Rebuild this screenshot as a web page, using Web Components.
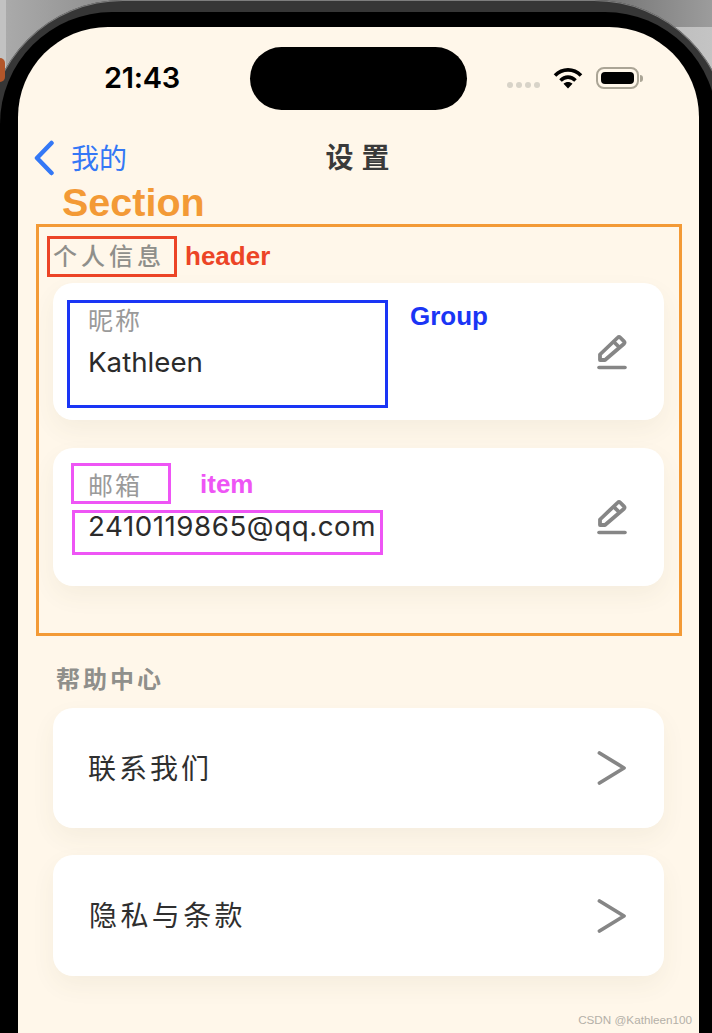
<!DOCTYPE html>
<html lang="zh">
<head>
<meta charset="utf-8">
<title>设置</title>
<style>
    html, body {
        margin: 0;
        width: 712px;
        height: 1033px;
        overflow: hidden;
    }
    body {
        position: relative;
        background:
            linear-gradient(90deg, #6f6f6f, #9c9c9c) 592px 0 / 120px 27px no-repeat,
            linear-gradient(90deg, #b0b0b0, #c4c4c4) 592px 27px / 120px 100px no-repeat,
            linear-gradient(90deg, #c2c2c2 0 6px, #aaaaaa 6px, #8c8c8c 120px);
        font-family: "Noto Sans CJK SC", sans-serif;
    }
</style>
</head>
<body>
    <phone-frame>
        <status-bar></status-bar>
        <nav-bar back="我的" title="设置"></nav-bar>

        <settings-section title="个人信息" first>
            <settings-card label="昵称" value="Kathleen" icon="edit"></settings-card>
            <settings-card label="邮箱" value="2410119865@qq.com" icon="edit" style="--value-top:0px;--main-bottom:35px;--value-space:0.55px"></settings-card>
        </settings-section>

        <settings-section title="帮助中心" heavy>
            <settings-card text="联系我们" icon="arrow"></settings-card>
            <settings-card text="隐私与条款" icon="arrow" style="--text-height:121px;--text-left:1px;--text-space:3.4px"></settings-card>
        </settings-section>
    </phone-frame>

    <note-box style="left:36px;top:224px;width:646px;height:412px;--note:#f39a36"></note-box>
    <note-box style="left:47px;top:236px;width:130px;height:41px;--note:#ec4426"></note-box>
    <note-box style="left:67px;top:300px;width:321px;height:108px;--note:#1a35f5"></note-box>
    <note-box style="left:71px;top:463px;width:100px;height:41px;--note:#ee55f5"></note-box>
    <note-box style="left:72px;top:510px;width:311px;height:45px;--note:#ee55f5"></note-box>

    <note-text style="left:62px;top:179px;font-size:39.5px;--note:#f39a36">Section</note-text>
    <note-text style="left:185px;top:241px;font-size:26px;--note:#ec4426">header</note-text>
    <note-text style="left:410px;top:301px;font-size:26px;--note:#1a35f5">Group</note-text>
    <note-text style="left:200px;top:469px;font-size:26px;--note:#ee55f5">item</note-text>

    <water-mark>CSDN @Kathleen100</water-mark>

<script>
class PhoneFrame extends HTMLElement {
    connectedCallback() {
        const shadow = this.attachShadow({ mode: 'open' })
        shadow.innerHTML = `
        <style>
            :host {
                display: block;
                width: 712px;
                height: 1033px;
                overflow: hidden;
            }
            .bezel {
                box-sizing: border-box;
                width: 741px;
                height: 1033px;
                margin-left: -12px;
                padding: 12px 12px 0;
                border-radius: 135px 135px 0 0;
                background: #363636;
                box-shadow: inset 0 0 0 1px #7d7d7d;
            }
            .body {
                height: 100%;
                box-sizing: border-box;
                padding: 15px 18px 0;
                border-radius: 112px 112px 0 0;
                background: #000;
            }
            .screen {
                height: 100%;
                border-radius: 90px 90px 0 0;
                background: #fff7ea;
                overflow: hidden;
            }
            .spot {
                position: absolute;
                left: -5px;
                top: 58px;
                width: 10px;
                height: 24px;
                border-radius: 5px;
                background: #b3562a;
            }
        </style>
        <div class="spot"></div>
        <div class="bezel"><div class="body"><div class="screen"><slot></slot></div></div></div>
        `
    }
}

class StatusBar extends HTMLElement {
    connectedCallback() {
        const shadow = this.attachShadow({ mode: 'open' })
        shadow.innerHTML = `
        <style>
            :host {
                display: block;
                height: 100px;
            }
            .row {
                display: grid;
                grid-template-columns: 232px 217px 1fr;
                height: 83px;
                padding-top: 20px;
                box-sizing: border-box;
            }
            .time {
                padding: 10px 0 0 86px;
                font: 600 29px/42px Inter, "Liberation Sans", sans-serif;
                letter-spacing: -0.3px;
                color: #000;
            }
            .island {
                height: 63px;
                border-radius: 32px;
                background: #000;
            }
            .right {
                display: flex;
                align-items: center;
                height: 44px;
                margin: 9px 0 0 40px;
            }
            .dots {
                display: flex;
                gap: 3px;
                margin: 13px 13px 0 0;
            }
            .dots i {
                width: 6px;
                height: 6px;
                border-radius: 50%;
                background: #d8d3c8;
            }
            .battery {
                box-sizing: border-box;
                width: 43px;
                height: 22px;
                margin-left: 13px;
                padding: 3px;
                border: 2px solid #aba596;
                border-radius: 8px;
            }
            .battery b {
                display: block;
                height: 100%;
                border-radius: 4px;
                background: #000;
            }
            .nub {
                width: 3px;
                height: 7px;
                margin-left: 1px;
                border-radius: 0 3px 3px 0;
                background: #aba596;
            }
        </style>
        <div class="row">
            <div class="time">21:43</div>
            <div class="island"></div>
            <div class="right">
                <div class="dots"><i></i><i></i><i></i><i></i></div>
                <svg width="30" height="22" viewBox="0 0 30 22">
                    <path d="M2 8.5C9.5 1 20.500 1 28 8.500" fill="none" stroke="#000" stroke-width="3.600"/>
                    <path d="M7.500 13.500C12 9 18 9 22.500 13.500" fill="none" stroke="#000" stroke-width="3.600"/>
                    <path d="M15 21.500L10.500 16.800C13 14.500 17 14.500 19.500 16.800Z" fill="#000"/>
                </svg>
                <div class="battery"><b></b></div>
                <div class="nub"></div>
            </div>
        </div>
        `
    }
}

class NavBar extends HTMLElement {
    connectedCallback() {
        const shadow = this.attachShadow({ mode: 'open' })
        shadow.innerHTML = `
        <style>
            :host {
                display: block;
                height: 62px;
            }
            .bar {
                display: grid;
                grid-template-columns: 1fr auto 1fr;
                align-items: center;
                box-sizing: border-box;
                height: 100%;
                padding-bottom: 2px;
            }
            .back {
                display: flex;
                align-items: center;
                gap: 16px;
                padding-left: 15px;
                font-size: 28px;
                line-height: 40px;
                color: #3478f6;
            }
            .back svg {
                margin-top: 2px;
            }
            .title {
                margin-bottom: 2px;
                padding-left: 6px;
                font-size: 28px;
                font-weight: 700;
                letter-spacing: 8px;
                color: #3a3a3a;
            }
        </style>
        <div class="bar">
            <div class="back">
                <svg width="22" height="36" viewBox="0 0 22 36">
                    <path d="M18.500 3L4 18L18.500 33" fill="none" stroke="#3478f6" stroke-width="4.500" stroke-linecap="round" stroke-linejoin="round"/>
                </svg>
                <span>${this.getAttribute('back')}</span>
            </div>
            <div class="title">${this.getAttribute('title')}</div>
            <div></div>
        </div>
        `
    }
}

class SettingsSection extends HTMLElement {
    connectedCallback() {
        const shadow = this.attachShadow({ mode: 'open' })
        const first = this.hasAttribute('first')
        shadow.innerHTML = `
        <style>
            :host {
                display: block;
                margin: ${first ? 49 : 75}px 35px 0;
            }
            .head {
                height: 34px;
                margin: 0 0 ${first ? 11 : 13}px;
                padding-left: ${first ? 0 : 3}px;
                font-size: 24px;
                font-weight: ${first ? 500 : 700};
                line-height: 34px;
                letter-spacing: ${first ? 4 : 3}px;
                color: #8f8f8b;
            }
            .list {
                display: flex;
                flex-direction: column;
                gap: ${first ? 28 : 27}px;
            }
        </style>
        <div class="head">${this.getAttribute('title')}</div>
        <div class="list"><slot></slot></div>
        `
    }
}

class SettingsCard extends HTMLElement {
    connectedCallback() {
        const shadow = this.attachShadow({ mode: 'open' })
        const icon = this.getAttribute('icon') === 'edit' ? `
            <svg width="30" height="36" viewBox="0 0 30 36">
                <path d="M3 26V20.500L20.800 3.500Q22 2.300 23.200 3.500L27 7.300Q28.200 8.500 27 9.700L8 26Z" fill="none" stroke="#868686" stroke-width="3.800" stroke-linejoin="round"/>
                <path d="M16.500 7.500L23 14" fill="none" stroke="#868686" stroke-width="3.800"/>
                <path d="M2 33.500H28" fill="none" stroke="#868686" stroke-width="3.600" stroke-linecap="round"/>
            </svg>` : `
            <svg width="30" height="34" viewBox="0 0 30 34">
                <path d="M2.500 2L27 17L2.500 32" fill="none" stroke="#868686" stroke-width="3.800" stroke-linecap="round" stroke-linejoin="round"/>
            </svg>`
        const body = this.hasAttribute('text')
            ? `<div class="text">${this.getAttribute('text')}</div>`
            : `<div class="label">${this.getAttribute('label')}</div>
               <div class="value">${this.getAttribute('value')}</div>`
        shadow.innerHTML = `
        <style>
            :host {
                display: block;
            }
            .card {
                display: flex;
                align-items: center;
                justify-content: space-between;
                padding: 0 37px 0 35px;
                border-radius: 20px;
                background: #fff;
                box-shadow: 0 10px 24px rgba(90, 80, 50, 0.06);
            }
            .main {
                padding: 19px 0 var(--main-bottom, 33px);
            }
            .main.plain {
                padding: 0;
            }
            .label {
                font-size: 25px;
                line-height: 34px;
                letter-spacing: 2px;
                color: #9a9a9a;
            }
            .value {
                margin-top: var(--value-top, 1px);
                font: 400 27.700px/50px Inter, "Liberation Sans", sans-serif;
                letter-spacing: var(--value-space, 0);
                color: #2b2b2b;
            }
            .text {
                height: var(--text-height, 120px);
                padding-left: var(--text-left, 0);
                font-size: 28px;
                line-height: calc(var(--text-height, 120px) - 2px);
                letter-spacing: var(--text-space, 3px);
                color: #2f2f2f;
            }
        </style>
        <div class="card">
            <div class="main ${this.hasAttribute('text') ? 'plain' : ''}">${body}</div>
            ${icon}
        </div>
        `
    }
}

class NoteBox extends HTMLElement {
    connectedCallback() {
        const shadow = this.attachShadow({ mode: 'open' })
        shadow.innerHTML = `
        <style>
            :host {
                position: absolute;
                box-sizing: border-box;
                border: 3px solid var(--note);
            }
        </style>
        `
    }
}

class NoteText extends HTMLElement {
    connectedCallback() {
        const shadow = this.attachShadow({ mode: 'open' })
        shadow.innerHTML = `
        <style>
            :host {
                position: absolute;
                font-family: "Liberation Sans", Arial, sans-serif;
                font-weight: 700;
                line-height: 1.200;
                color: var(--note);
            }
        </style>
        <slot></slot>
        `
    }
}

class WaterMark extends HTMLElement {
    connectedCallback() {
        const shadow = this.attachShadow({ mode: 'open' })
        shadow.innerHTML = `
        <style>
            :host {
                position: absolute;
                right: 20px;
                bottom: 5px;
                font: 400 11.700px/16px "Liberation Sans", Arial, sans-serif;
                color: #b4b0a8;
            }
        </style>
        <slot></slot>
        `
    }
}

customElements.define('phone-frame', PhoneFrame)
customElements.define('status-bar', StatusBar)
customElements.define('nav-bar', NavBar)
customElements.define('settings-section', SettingsSection)
customElements.define('settings-card', SettingsCard)
customElements.define('note-box', NoteBox)
customElements.define('note-text', NoteText)
customElements.define('water-mark', WaterMark)
</script>
</body>
</html>
